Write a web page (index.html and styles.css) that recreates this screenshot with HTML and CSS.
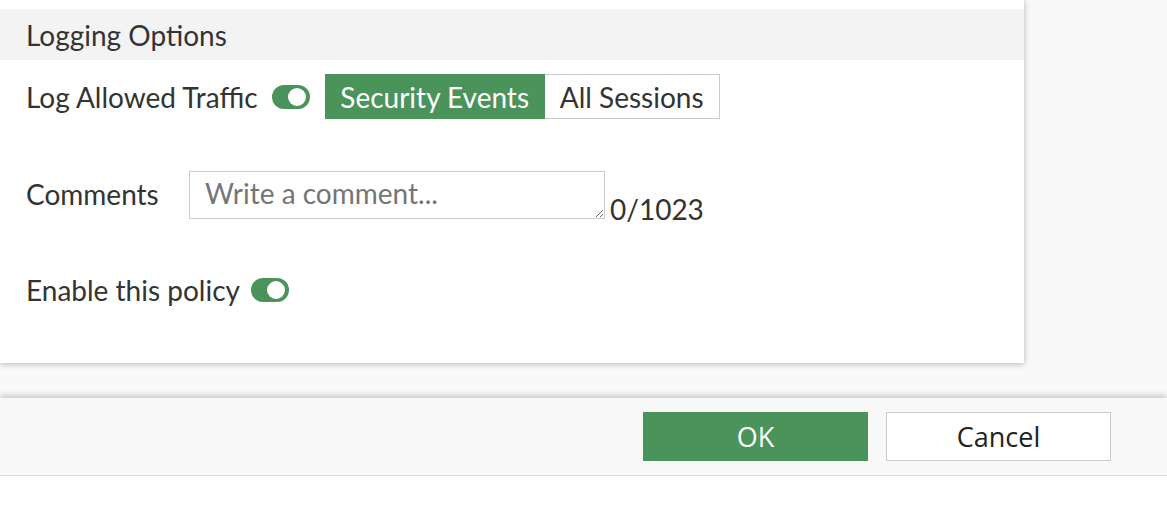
FILE: index.html
```html
<!DOCTYPE html>
<html>
<head>
<meta charset="utf-8">
<link rel="stylesheet" href="styles.css">
</head>
<body>
<div class="page">
  <div class="panel">
    <div class="section-head">Logging Options</div>
    <div class="row row-log">
      <span class="label">Log Allowed Traffic</span>
      <span class="toggle"><span class="knob"></span></span>
      <div class="seg">
        <span class="seg-btn active">Security Events</span>
        <span class="seg-btn">All Sessions</span>
      </div>
    </div>
    <div class="row row-comments">
      <span class="label label-comments">Comments</span>
      <div class="textarea-wrap">
        <textarea class="comment" placeholder="Write a comment..."></textarea>
      </div>
      <span class="counter">0/1023</span>
    </div>
    <div class="row row-enable">
      <span class="label">Enable this policy</span>
      <span class="toggle"><span class="knob"></span></span>
    </div>
  </div>
  <div class="footer">
    <button class="btn btn-ok">OK</button>
    <button class="btn btn-cancel">Cancel</button>
  </div>
  <div class="below"></div>
</div>
</body>
</html>
```

FILE: styles.css
```css
html, body {
  margin: 0;
  padding: 0;
  height: 100%;
}
body {
  background: #f9f9f9;
  font-family: Lato, "Open Sans", sans-serif;
  color: #333333;
  overflow: hidden;
}
.page {
  display: flex;
  flex-direction: column;
  height: 524px;
}
.panel {
  width: 1024px;
  height: 363px;
  box-sizing: border-box;
  background: #ffffff;
  padding-top: 9px;
  box-shadow: 0 1px 6px rgba(0, 0, 0, 0.28);
  flex: none;
}
.section-head {
  height: 51px;
  background: #f3f3f3;
  padding-left: 26px;
  font-size: 28px;
  line-height: 53px;
  color: #333;
}
.row {
  display: flex;
  align-items: center;
  padding-left: 26px;
}
.label {
  font-size: 28px;
  color: #333;
  white-space: nowrap;
}
.row-log {
  margin-top: 14px;
  height: 45px;
}
.toggle {
  position: relative;
  display: inline-block;
  width: 38px;
  height: 24px;
  border-radius: 12px;
  background: #4a935a;
  margin-left: 14px;
  flex: none;
}
.knob {
  position: absolute;
  right: 4px;
  top: 3px;
  width: 18px;
  height: 18px;
  border-radius: 50%;
  background: #ffffff;
}
.seg {
  display: flex;
  margin-left: 15px;
  height: 45px;
}
.seg-btn {
  display: flex;
  align-items: center;
  justify-content: center;
  font-size: 28px;
  box-sizing: border-box;
  height: 45px;
  color: #333;
  border: 1px solid #cccccc;
  border-left: none;
  width: 175px;
  background: #fff;
}
.seg-btn.active {
  background: #4a935a;
  color: #ffffff;
  border: none;
  width: 220px;
}
.row-comments {
  margin-top: 52px;
  align-items: flex-start;
}
.label-comments {
  line-height: 46px;
  width: 163px;
}
.textarea-wrap {
  display: flex;
}
.comment {
  width: 416px;
  height: 48px;
  box-sizing: border-box;
  border: 1px solid #cccccc;
  font-family: Lato, sans-serif;
  font-size: 28px;
  padding: 4px 15px 2px;
  color: #333;
  resize: vertical;
  margin: 0;
  outline: none;
}
.comment::placeholder {
  color: #757575;
}
.counter {
  font-size: 28px;
  align-self: flex-end;
  margin-left: 5px;
  line-height: 26px;
  margin-bottom: -3px;
  color: #333;
}
.row-enable {
  margin-top: 55px;
  height: 32px;
}
.row-enable .toggle {
  margin-left: 11px;
}
.footer {
  margin-top: 35px;
  height: 78px;
  box-sizing: border-box;
  background: #f8f8f8;
  border-bottom: 1px solid #dddddd;
  box-shadow: 0 -3px 6px rgba(0, 0, 0, 0.18);
  display: flex;
  align-items: center;
  padding-left: 643px;
  gap: 18px;
  flex: none;
}
.btn {
  width: 225px;
  height: 49px;
  box-sizing: border-box;
  font-family: "Open Sans", sans-serif;
  font-size: 27px;
  margin: 0;
  padding: 0;
  cursor: pointer;
}
.btn-ok {
  background: #4a935a;
  color: #ffffff;
  border: none;
}
.btn-cancel {
  background: #ffffff;
  color: #222;
  border: 1px solid #cccccc;
}
.below {
  flex: 1;
  background: #ffffff;
}
```
